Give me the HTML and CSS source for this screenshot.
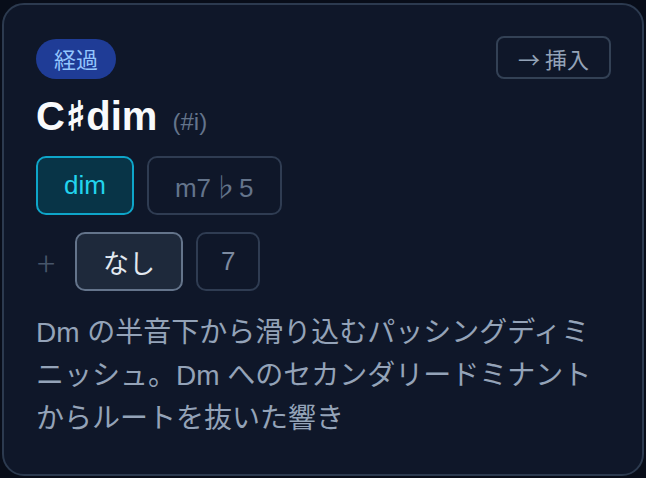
FILE: index.html
```html
<!DOCTYPE html>
<html lang="ja">
<head>
<meta charset="utf-8">
<title>C♯dim</title>
<link rel="stylesheet" href="styles.css">
</head>
<body>
<div class="frame">
  <section class="card">
    <header class="card-head">
      <span class="badge">経過</span>
      <button class="insert-btn">→ 挿入</button>
    </header>
    <h1 class="chord">C<span class="sharp">♯</span>dim <span class="degree">(#i)</span></h1>
    <div class="chip-row">
      <button class="chip chip-active">dim</button>
      <button class="chip">m7<span class="flat">♭</span>5</button>
    </div>
    <div class="chip-row">
      <span class="plus">+</span>
      <button class="chip chip-selected">なし</button>
      <button class="chip chip-narrow">7</button>
    </div>
    <p class="desc">Dm の半音下から滑り込むパッシングディミニッシュ。Dm へのセカンダリードミナントからルートを抜いた響き</p>
  </section>
</div>
</body>
</html>
```

FILE: styles.css
```css
* { box-sizing: border-box; }
html, body { height: 100%; }
body {
  margin: 0;
  background: #080d19;
  font-family: "Liberation Sans", "Noto Sans CJK JP", sans-serif;
  color: #94a3b8;
}
.frame {
  height: 100%;
  padding: 3px 2px 2px 2px;
}
.card {
  height: 100%;
  background: #0f1729;
  border: 2px solid #2c3a4f;
  border-radius: 22px;
  padding: 31px 32px 32px 32px;
  display: flex;
  flex-direction: column;
}
.card-head {
  display: flex;
  justify-content: space-between;
  align-items: center;
}
.badge {
  display: inline-flex;
  align-items: center;
  height: 40px;
  margin-top: 2px;
  padding: 0 18px 2px 18px;
  border-radius: 20px;
  background: #1f3c96;
  color: #93c5fd;
  font-size: 22px;
}
.insert-btn {
  font-family: "Noto Sans CJK JP", sans-serif;
  height: 43px;
  padding: 0 20px;
  margin-right: -1px;
  background: transparent;
  border: 2px solid #334155;
  border-radius: 8px;
  color: #94a3b8;
  font-size: 22px;
}
.chord {
  margin: 15px 0 0 0;
  line-height: 44px;
  font-size: 40px;
  font-weight: 700;
  color: #f8fafc;
}
.sharp {
  font-family: "DejaVu Sans", sans-serif;
  font-weight: 700;
  -webkit-text-stroke: 1.4px currentColor;
  margin: 0 1px;
}
.degree {
  font-size: 24px;
  font-weight: 400;
  color: #64748b;
  margin-left: 4px;
}
.chip-row {
  display: flex;
  align-items: center;
  gap: 13px;
  margin-top: 12px;
}
.chip-row + .chip-row { margin-top: 17px; }
.chip {
  font-family: inherit;
  height: 59px;
  padding: 0 26px;
  border-radius: 10px;
  border: 2px solid #2f3c52;
  background: transparent;
  color: #64748b;
  font-size: 26px;
}
.chip-active {
  background: #083447;
  border-color: #0ea5c9;
  color: #22d3ee;
}
.chip-selected {
  background: #1e293b;
  border-color: #64748b;
  color: #e2e8f0;
}
.chip-narrow {
  padding: 0 23px;
  color: #7c8aa0;
}
.flat {
  font-family: "Noto Sans CJK JP", sans-serif;
  margin: 0 1px;
}
.plus {
  font-family: "Noto Sans CJK JP", sans-serif;
  font-size: 34px;
  font-weight: 300;
  line-height: 1;
  color: #475569;
  width: 25px;
  margin-left: 1px;
}
.desc {
  margin: 20px 0 0 0;
  font-size: 28px;
  line-height: 43px;
  color: #94a3b8;
}
```
